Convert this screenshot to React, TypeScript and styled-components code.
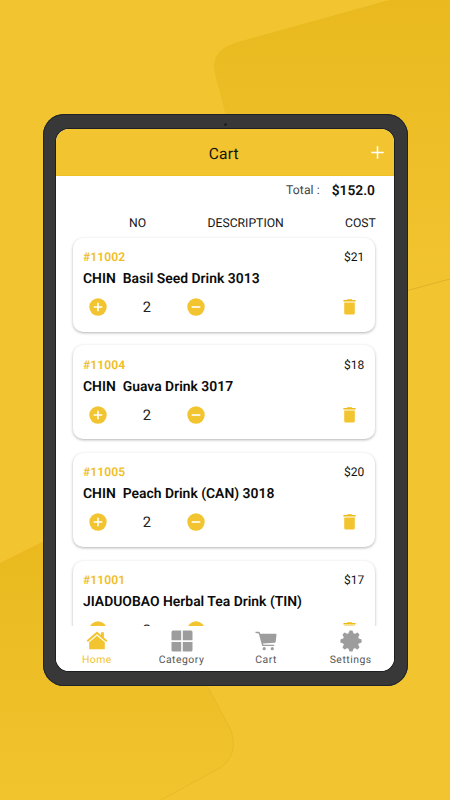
import React from "react";
import styled, { createGlobalStyle } from "styled-components";

const YELLOW = "#f2c430";

const GlobalStyle = createGlobalStyle`
  * { box-sizing: border-box; }
  html, body { margin: 0; padding: 0; }
  body {
    font-family: Roboto, "Liberation Sans", sans-serif;
    background: ${YELLOW};
    overflow: hidden;
    text-rendering: geometricPrecision;
  }
`;

const Page = styled.main`
  position: relative;
  width: 450px;
  height: 800px;
  padding: 114px 0 0 43px;
  background: ${YELLOW};
  overflow: hidden;
`;

const Backdrop = styled.svg`
  position: absolute;
  inset: 0;
`;

const Device = styled.div`
  position: relative;
  width: 364.5px;
  height: 572px;
  padding: 15px 13.5px 15px 13px;
  border-radius: 21px;
  background: #383838;
  box-shadow: inset 0 0 0 1px #20242a;
`;

const Camera = styled.span`
  position: absolute;
  left: 181px;
  top: 9px;
  width: 3px;
  height: 3px;
  border-radius: 50%;
  background: #1d2023;
`;

const Screen = styled.div`
  display: flex;
  flex-direction: column;
  height: 542px;
  border-radius: 13px;
  overflow: hidden;
  background: #fff;
  box-shadow: 0 0 0 1px #1d2023;
`;

const Header = styled.header`
  flex: none;
  display: grid;
  grid-template-columns: 32px 1fr 32px;
  align-items: center;
  height: 47px;
  margin-right: 0.5px;
  background: ${YELLOW};
  border-bottom: 1px solid #efbf26;
`;

const Title = styled.h1`
  grid-column: 2;
  margin: 3px 2px 0 0;
  text-align: center;
  font-size: 15.5px;
  font-weight: 400;
  letter-spacing: 0.15px;
  color: #17150c;
`;

const AddButton = styled.button`
  display: flex;
  justify-content: center;
  padding: 0;
  border: 0;
  background: none;
`;

const Total = styled.div`
  flex: none;
  display: flex;
  justify-content: flex-end;
  align-items: center;
  gap: 12px;
  height: 29px;
  padding-right: 19px;
`;

const TotalLabel = styled.span`
  font-size: 12.2px;
  line-height: 16px;
  letter-spacing: 0.05px;
  color: #444;
  margin-top: -1px;
`;

const TotalValue = styled.strong`
  margin-top: 1.5px;
  font-size: 13.8px;
  font-weight: 600;
  line-height: 16px;
  color: #111;
`;

const Columns = styled.div`
  flex: none;
  display: grid;
  grid-template-columns: 77px 139px 102px;
  align-items: center;
  height: 30px;
  padding: 6px 0 0 4px;
  font-size: 12.2px;
  color: #151515;
`;

const Column = styled.span<{ $start: number }>`
  padding-left: ${(p) => p.$start}px;
  white-space: nowrap;
`;

const List = styled.section`
  flex: 1;
  min-height: 0;
  display: flex;
  flex-direction: column;
  gap: 13.7px;
  padding: 2.5px 18.7px 0 17px;
  overflow: hidden;
`;

const Card = styled.article`
  flex: none;
  height: 94px;
  padding: 10.6px 11px 0 10px;
  border-radius: 10px;
  background: #fff;
  box-shadow: 0 1px 3px rgba(0, 0, 0, 0.3);
`;

const CardTop = styled.div`
  display: flex;
  justify-content: space-between;
  height: 18px;
  line-height: 18px;
`;

const Code = styled.span`
  font-size: 12.1px;
  font-weight: 600;
  letter-spacing: 0.1px;
  color: #efbe25;
`;

const Cost = styled.span`
  font-size: 12px;
  color: #111;
`;

const Name = styled.h2`
  margin: 2.8px 0 0;
  font-size: 13.92px;
  font-weight: 600;
  line-height: 20px;
  white-space: pre;
  color: #0b0b0b;
`;

const Actions = styled.div`
  display: grid;
  grid-template-columns: 30px 68px 30px 1fr 29px;
  align-items: center;
  justify-items: center;
  height: 20px;
  margin-top: 8px;
`;

const Quantity = styled.span`
  font-size: 14.7px;
  line-height: 20px;
  color: #222;
`;

const IconButton = styled.button<{ $column: number }>`
  grid-column: ${(p) => p.$column};
  display: flex;
  padding: 0;
  border: 0;
  background: none;
`;

const Nav = styled.nav`
  flex: none;
  display: grid;
  grid-template-columns: repeat(4, 84.6px);
  height: 45px;
  margin-left: -1.4px;
  background: #fff;
`;

const NavItem = styled.a<{ $active?: boolean }>`
  display: flex;
  flex-direction: column;
  align-items: center;
  padding-top: 4px;
  font-size: 10.4px;
  line-height: 14px;
  letter-spacing: 0.5px;
  color: ${(p) => (p.$active ? YELLOW : "#555")};
  svg { fill: ${(p) => (p.$active ? YELLOW : "#9d9d9d")}; }
`;

const NavLabel = styled.span`
  margin-top: 1px;
`;

const PlusIcon = () => (
  <svg width="13" height="13" viewBox="0 0 13 13" stroke="#fff" strokeWidth="1.5">
    <path d="M6.5 0.3v12.4M0.3 6.5h12.4" />
  </svg>
);

const CircleIcon = ({ plus }: { plus?: boolean }) => (
  <svg width="18" height="18" viewBox="0 0 18 18">
    <circle cx="9" cy="9" r="8.7" fill={YELLOW} />
    <path d={plus ? "M9 4.7v8.6M4.7 9h8.6" : "M4.7 9h8.6"} stroke="#fff" strokeWidth="1.6" />
  </svg>
);

const TrashIcon = () => (
  <svg width="13" height="16" viewBox="0 0 13 16">
    <path d="M1.2 3.5h10.6V14q0 1.5-1.5 1.5H2.7q-1.5 0-1.5-1.5z" fill={YELLOW} />
    <path d="M.4.9h3.3l.8-.7h4l.8.7h3.3v1.6H.4z" fill="#eebb16" />
  </svg>
);

const HomeIcon = () => (
  <svg width="22" height="22" viewBox="0 0 22 22">
    <path d="M11 1.6.6 10.4l1.3 1.5L11 4.3l9.1 7.6 1.3-1.5-3.5-3V2.2h-3v2.7z" />
    <path d="M11 5.8 3.2 12.2v6.5q0 .6.6.6h14.4q.6 0 .6-.6v-6.5z" />
  </svg>
);

const GridIcon = () => (
  <svg width="22" height="22" viewBox="0 0 22 22">
    <path d="M2 .5h8.2v9.8H.5V2Q.5.5 2 .5zM11.8.5H20Q21.5.5 21.5 2v8.3h-9.7zM.5 11.9h9.7v9.6H2Q.5 21.5.5 20zM11.8 11.9h9.7V20q0 1.5-1.5 1.5h-8.2z" />
  </svg>
);

const CartIcon = () => (
  <svg width="22" height="22" viewBox="0 0 22 22">
    <path d="M.5 1.8h3.4q.7 0 .9.7l.4 1.2h15.4q1 0 .9 1l-.8 7q-.1 1-1.1 1.1L8 13.5l.3 1.2h10.9v1.3H7.2L3.8 3.4.5 2.9z" />
    <circle cx="9.2" cy="18.7" r="1.6" />
    <circle cx="17.3" cy="18.7" r="1.6" />
  </svg>
);

const GearIcon = () => (
  <svg width="22" height="22" viewBox="0 0 22 22">
    <circle cx="11" cy="11" r="8.1" />
    {[0, 45, 90, 135, 180, 225, 270, 315].map((angle) => (
      <path
        key={angle}
        d="M8.3 4 9.3.9Q9.5.4 10 .4h2q.5 0 .7.5L13.7 4z"
        transform={`rotate(${angle} 11 11)`}
      />
    ))}
  </svg>
);

const items = [
  { code: "#11002", name: "CHIN  Basil Seed Drink 3013", cost: "$21", quantity: 2 },
  { code: "#11004", name: "CHIN  Guava Drink 3017", cost: "$18", quantity: 2 },
  { code: "#11005", name: "CHIN  Peach Drink (CAN) 3018", cost: "$20", quantity: 2 },
  { code: "#11001", name: "JIADUOBAO Herbal Tea Drink (TIN)", cost: "$17", quantity: 2 },
];

const tabs = [
  { label: "Home", Icon: HomeIcon, active: true },
  { label: "Category", Icon: GridIcon },
  { label: "Cart", Icon: CartIcon },
  { label: "Settings", Icon: GearIcon },
];

export default function App() {
  return (
    <Page>
      <GlobalStyle />
      <Backdrop width="450" height="800" viewBox="0 0 450 800" aria-hidden="true">
        <defs>
          <linearGradient id="upper" gradientUnits="userSpaceOnUse" x1="0" y1="0" x2="0" y2="300">
            <stop offset="0" stopColor="#e9b91f" />
            <stop offset="1" stopColor="#f2c430" />
          </linearGradient>
          <linearGradient id="lower" gradientUnits="userSpaceOnUse" x1="0" y1="540" x2="0" y2="800">
            <stop offset="0" stopColor="#e9b91f" />
            <stop offset="1" stopColor="#f1c32d" />
          </linearGradient>
          <filter id="soft"><feGaussianBlur stdDeviation="0.6" /></filter>
        </defs>
        <path d="M389 0 236 42.5Q209 51 215 74L263 260Q273 299 308 309L450 279V0z" fill="url(#upper)" />
        <path d="M400 292.5 450 279" stroke="#dfb129" fill="none" filter="url(#soft)" />
        <path d="M0 563 130 498 208 687 231 730Q239 755 220 768L161 800H0z" fill="url(#lower)" />
        <path d="M208 687 231 730Q239 755 220 768L161 800" stroke="#e6b828" strokeWidth=".8" fill="none" filter="url(#soft)" />
      </Backdrop>
      <Device>
        <Camera />
        <Screen>
          <Header>
            <Title>Cart</Title>
            <AddButton aria-label="Add"><PlusIcon /></AddButton>
          </Header>
          <Total>
            <TotalLabel>Total :</TotalLabel>
            <TotalValue>$152.0</TotalValue>
          </Total>
          <Columns>
            <Column $start={69}>NO</Column>
            <Column $start={70.5}>DESCRIPTION</Column>
            <Column $start={69}>COST</Column>
          </Columns>
          <List>
            {items.map((item) => (
              <Card key={item.code}>
                <CardTop>
                  <Code>{item.code}</Code>
                  <Cost>{item.cost}</Cost>
                </CardTop>
                <Name>{item.name}</Name>
                <Actions>
                  <IconButton $column={1} aria-label="Increase"><CircleIcon plus /></IconButton>
                  <Quantity>{item.quantity}</Quantity>
                  <IconButton $column={3} aria-label="Decrease"><CircleIcon /></IconButton>
                  <IconButton $column={5} aria-label="Remove"><TrashIcon /></IconButton>
                </Actions>
              </Card>
            ))}
          </List>
          <Nav>
            {tabs.map(({ label, Icon, active }) => (
              <NavItem key={label} $active={active}>
                <Icon />
                <NavLabel>{label}</NavLabel>
              </NavItem>
            ))}
          </Nav>
        </Screen>
      </Device>
    </Page>
  );
}
